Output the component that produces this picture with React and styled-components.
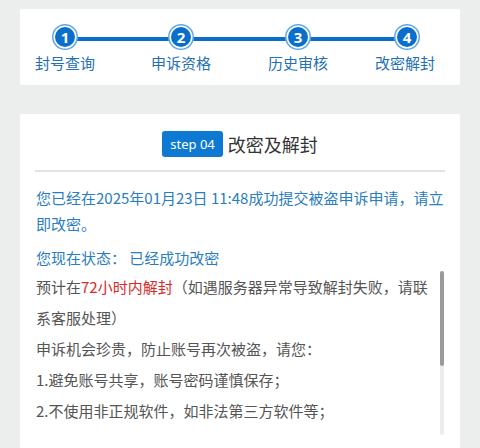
import React from "react";
import styled, { createGlobalStyle } from "styled-components";

const GlobalStyle = createGlobalStyle`
  html, body {
    margin: 0;
    padding: 0;
    overflow: hidden;
    background: #eceeee;
    font-family: "Noto Sans CJK SC", "Noto Sans", sans-serif;
  }
`;

const Page = styled.div`
  padding: 9px 20px 0;
  display: flex;
  flex-direction: column;
  gap: 29px;
`;

const Card = styled.div`
  background: #fff;
  border-radius: 2px;
`;

const StepCard = styled(Card)`
  height: 76px;
  padding: 0 16px;
  display: flex;
  align-items: flex-start;
`;

const StepRow = styled.div`
  position: relative;
  display: grid;
  grid-template-columns: 116px 117px 107px 58px;
  padding-top: 18px;

  &::before {
    content: "";
    position: absolute;
    top: 28px;
    left: 29px;
    width: 340px;
    height: 4px;
    background: #0a6fcc;
  }
`;

const Step = styled.div`
  width: 58px;
  display: flex;
  flex-direction: column;
  align-items: center;
  gap: 6px;
  position: relative;
`;

const Dot = styled.div`
  width: 20px;
  height: 20px;
  margin-left: ${(p) => p.$shift || 0}px;
  border-radius: 50%;
  background: #0a6fcc;
  box-shadow: 0 0 0 1.5px #fff, 0 0 0 3px #5fa6e6;
  color: #fff;
  font-family: "Noto Sans", sans-serif;
  font-weight: 700;
  font-size: 15px;
  line-height: 20px;
  text-align: center;
`;

const StepLabel = styled.div`
  font-size: 15px;
  line-height: 20px;
  color: #2470b3;
  white-space: nowrap;
`;

const MainCard = styled(Card)`
  padding: 17px 16px 40px;
`;

const Header = styled.div`
  display: flex;
  justify-content: center;
  align-items: center;
  gap: 5px;
  padding-bottom: 13px;
  margin: 0 -1px;
  border-bottom: 2px solid #e3e3e3;
`;

const Badge = styled.span`
  background: #0d79d3;
  color: #fff;
  font-family: "Noto Sans", sans-serif;
  font-size: 13px;
  line-height: 26px;
  height: 26px;
  padding: 0 8px;
  border-radius: 3px;
`;

const Title = styled.span`
  font-size: 18px;
  color: #333;
`;

const Notice = styled.p`
  margin: ${(p) => p.$top || 0}px 0 0;
  font-size: 15px;
  line-height: 26px;
  color: #2a7dc0;
`;

const ScrollBox = styled.div`
  display: flex;
  height: 164px;
`;

const ScrollText = styled.div`
  flex: 1;
  overflow: hidden;
`;

const Track = styled.div`
  width: 4px;
  background: #ececec;
  border-radius: 2px;
`;

const Thumb = styled.div`
  height: ${(p) => p.$size}px;
  background: #9a9a9a;
  border-radius: 2px;
`;

const Para = styled.p`
  margin: 0;
  font-size: 15px;
  line-height: 31px;
  color: #555;
`;

const Red = styled.span`
  color: #d92a2a;
`;

const steps = [
  { n: 1, label: "封号查询" },
  { n: 2, label: "申诉资格" },
  { n: 3, label: "历史审核" },
  { n: 4, label: "改密解封", shift: 4 },
];

const tips = [
  "申诉机会珍贵，防止账号再次被盗，请您：",
  "1.避免账号共享，账号密码谨慎保存；",
  "2.不使用非正规软件，如非法第三方软件等；",
  "3.不要轻信他人，不向他人透露验证码；",
  "4.定期修改密码，开启账号保护；",
  "5.如有疑问请及时联系客服。",
];

export default function App() {
  return (
    <>
      <GlobalStyle />
      <Page>
        <StepCard>
          <StepRow>
            {steps.map((s) => (
              <Step key={s.n}>
                <Dot $shift={s.shift}>{s.n}</Dot>
                <StepLabel>{s.label}</StepLabel>
              </Step>
            ))}
          </StepRow>
        </StepCard>

        <MainCard>
          <Header>
            <Badge>step 04</Badge>
            <Title>改密及解封</Title>
          </Header>
          <Notice $top={13}>
            您已经在2025年01月23日 11:48成功提交被盗申诉申请，请立即改密。
          </Notice>
          <Notice $top={8}>您现在状态： 已经成功改密</Notice>
          <ScrollBox>
            <ScrollText>
              <Para>
                预计在<Red>72小时内解封</Red>（如遇服务器异常导致解封失败，请联系客服处理）
              </Para>
              {tips.map((t) => (
                <Para key={t}>{t}</Para>
              ))}
            </ScrollText>
            <Track>
              <Thumb $size={95} />
            </Track>
          </ScrollBox>
        </MainCard>
      </Page>
    </>
  );
}
